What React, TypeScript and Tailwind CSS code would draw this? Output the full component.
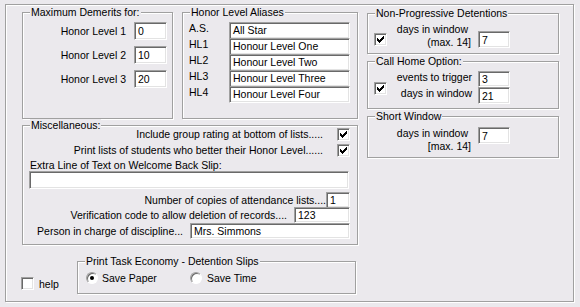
import React from 'react';

const BG = 'bg-[#ebe9ed]';

function GroupBox({
  title,
  className = '',
  children,
}: {
  title: string;
  className?: string;
  children?: React.ReactNode;
}) {
  return (
    <div
      className={`relative border border-[#a0a0a0] shadow-[inset_1px_1px_0_#fff,1px_1px_0_#fff] ${className}`}
    >
      <span className={`absolute left-[7px] top-[-7px] ${BG} px-[1px] leading-[12px] whitespace-nowrap`}>
        {title}
      </span>
      {children}
    </div>
  );
}

function Field({ value = '', className = '' }: { value?: string; className?: string }) {
  return (
    <div
      className={`shrink-0 bg-white border border-t-[#a0a0a0] border-l-[#a0a0a0] border-r-white border-b-white shadow-[inset_1px_1px_0_#696969,inset_-1px_-1px_0_#e3e3e3] pl-[3px] flex items-center overflow-hidden whitespace-nowrap ${className}`}
    >
      {value}
    </div>
  );
}

function Check({ checked = false, className = '' }: { checked?: boolean; className?: string }) {
  return (
    <div
      className={`shrink-0 w-[13px] h-[13px] bg-white border border-t-[#a0a0a0] border-l-[#a0a0a0] border-r-white border-b-white shadow-[inset_1px_1px_0_#696969,inset_-1px_-1px_0_#e3e3e3] flex items-center justify-center ${className}`}
    >
      {checked && (
        <svg width="7" height="7" viewBox="0 0 7 7" shapeRendering="crispEdges">
          {[2, 3, 4, 3, 2, 1, 0].map((y, x) => (
            <rect key={x} x={x} y={y} width="1" height="3" fill="#000" />
          ))}
        </svg>
      )}
    </div>
  );
}

function Radio({ checked = false }: { checked?: boolean }) {
  return (
    <div className="shrink-0 w-[12px] h-[12px] rounded-full bg-white border border-t-[#a0a0a0] border-l-[#a0a0a0] border-r-white border-b-white shadow-[inset_1px_1px_0_#696969] flex items-center justify-center">
      {checked && <div className="w-[4px] h-[4px] rounded-full bg-black" />}
    </div>
  );
}

const LEVELS = [
  ['Honor Level 1', '0'],
  ['Honor Level 2', '10'],
  ['Honor Level 3', '20'],
];

const ALIASES = [
  ['A.S.', 'All Star'],
  ['HL1', 'Honour Level One'],
  ['HL2', 'Honour Level Two'],
  ['HL3', 'Honour Level Three'],
  ['HL4', 'Honour Level Four'],
];

export default function App() {
  return (
    <div
      className={`w-[580px] h-[307px] ${BG} pt-[4px] pl-[5px] overflow-hidden font-['Liberation_Sans',Arial,sans-serif] text-[10.5px] leading-[12px] text-black`}
    >
      <div className="w-[569px] h-[298px] border border-[#a0a0a0] shadow-[inset_1px_1px_0_#fff,1px_1px_0_#fff] pt-[7px] pl-[16px] flex gap-[9px]">
        {/* left column */}
        <div className="w-[336px] flex flex-col">
          <div className="flex gap-[9px]">
            <GroupBox title="Maximum Demerits for:" className="w-[151px] h-[107px]">
              <div className="pt-[9px] pr-[5px] flex flex-col gap-[6px]">
                {LEVELS.map(([label, value]) => (
                  <div key={label} className="flex justify-end items-center gap-[8px]">
                    <span>{label}</span>
                    <Field value={value} className="w-[33px] h-[18px]" />
                  </div>
                ))}
              </div>
            </GroupBox>

            <GroupBox title="Honor Level Aliases" className="w-[176px] h-[107px]">
              <div className="pt-[9px] pl-[6px] flex flex-col">
                {ALIASES.map(([label, value]) => (
                  <div key={label} className="flex items-center h-[16px]">
                    <span className="w-[40px] relative -top-[2px]">{label}</span>
                    <Field value={value} className="w-[121px] h-[17px]" />
                  </div>
                ))}
              </div>
            </GroupBox>
          </div>

          <GroupBox title="Miscellaneous:" className="mt-[6px] h-[120px]">
            <div className="flex flex-col pr-[7px]">
              <div className="h-[16px] flex justify-end items-center gap-[14px]">
                <span>Include group rating at bottom of lists.....</span>
                <Check checked />
              </div>
              <div className="h-[16px] flex justify-end items-center gap-[14px]">
                <span>Print lists of students who better their Honor Level......</span>
                <Check checked />
              </div>
              <div className="h-[13px] pl-[7px] flex items-end">Extra Line of Text on Welcome Back Slip:</div>
              <Field className="ml-[6px] w-[320px] h-[18px]" />
              <div className="mt-[3px] h-[15px] flex justify-end items-center">
                <span>Number of copies of attendance lists....</span>
                <Field value="1" className="w-[24px] h-[16px]" />
              </div>
              <div className="h-[16px] flex justify-end items-center gap-[7px]">
                <span>Verification code to allow deletion of records....</span>
                <Field value="123" className="w-[56px] h-[16px]" />
              </div>
              <div className="h-[16px] flex justify-end items-center gap-[7px]">
                <span>Person in charge of discipline...</span>
                <Field value="Mrs. Simmons" className="w-[160px] h-[16px]" />
              </div>
            </div>
          </GroupBox>

          <div className="mt-[16px] flex">
            <div className="w-[56px] -ml-[1px] pt-[12px] flex items-center gap-[5px]">
              <Check />
              <span>help</span>
            </div>
            <GroupBox title="Print Task Economy - Detention Slips" className="w-[279px] h-[33px]">
              <div className="pl-[8px] pt-[10px] flex items-center">
                <div className="w-[104px] flex items-center gap-[4px]">
                  <Radio checked />
                  <span>Save Paper</span>
                </div>
                <div className="flex items-center gap-[5px]">
                  <Radio />
                  <span>Save Time</span>
                </div>
              </div>
            </GroupBox>
          </div>
        </div>

        {/* right column */}
        <div className="w-[192px] mt-[1px] flex flex-col gap-[7px]">
          <GroupBox title="Non-Progressive Detentions" className="h-[41px]">
            <div className="flex items-start pl-[6px]">
              <Check checked className="mt-[19px]" />
              <div className="w-[84px] mt-[9px] flex flex-col items-end leading-[13px]">
                <span className="pr-[3px]">days in window</span>
                <span>(max. 14]</span>
              </div>
              <Field value="7" className="mt-[17px] ml-[7px] w-[32px] h-[17px]" />
            </div>
          </GroupBox>

          <GroupBox title="Call Home Option:" className="h-[48px]">
            <div className="flex items-start pl-[6px]">
              <Check checked className="mt-[20px]" />
              <div className="w-[85px] mt-[9px] flex flex-col items-end">
                <span className="h-[16px] flex items-center -mt-[2px]">events to trigger</span>
                <span className="h-[16px] flex items-center">days in window</span>
              </div>
              <div className="mt-[9px] ml-[6px] flex flex-col">
                <Field value="3" className="w-[32px] h-[16px]" />
                <Field value="21" className="w-[32px] h-[17px]" />
              </div>
            </div>
          </GroupBox>

          <GroupBox title="Short Window" className="h-[42px]">
            <div className="flex items-start pl-[19px]">
              <div className="w-[84px] mt-[10px] flex flex-col items-end leading-[13px]">
                <span className="pr-[3px]">days in window</span>
                <span>[max. 14]</span>
              </div>
              <Field value="7" className="mt-[10px] ml-[7px] w-[32px] h-[17px]" />
            </div>
          </GroupBox>
        </div>
      </div>
    </div>
  );
}
